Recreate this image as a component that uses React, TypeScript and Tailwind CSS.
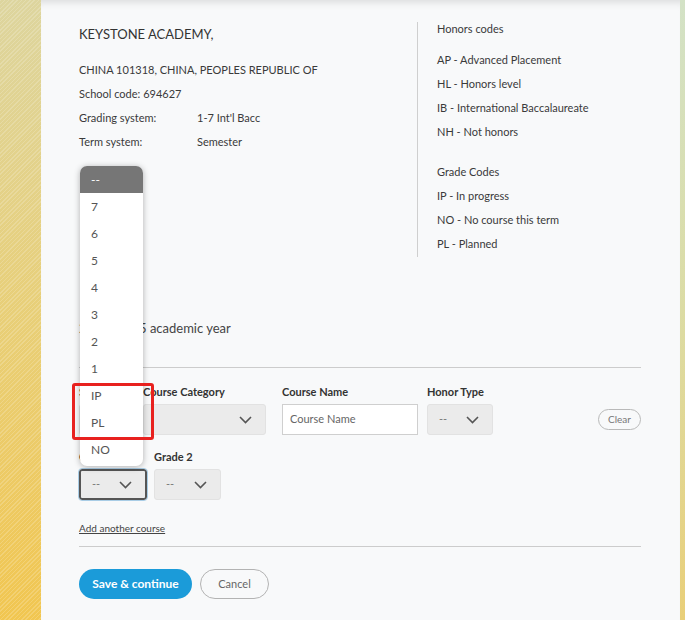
import React from "react";

const font = { fontFamily: "Lato, 'Open Sans', sans-serif" };

function Chevron() {
  return (
    <svg width="13" height="8" viewBox="0 0 13 8" fill="none">
      <polyline points="1,1 6.5,6.5 12,1" stroke="#555" strokeWidth="1.6" />
    </svg>
  );
}

function FakeSelect({ width, value = "", focused = false }: { width: string; value?: string; focused?: boolean }) {
  return (
    <div
      className={`${width} h-[31px] flex items-center justify-between pl-[11px] pr-[13px] rounded-[3px] bg-[#ebebeb] text-[11px] text-[#777] ${
        focused ? "border-2 border-[#555] outline outline-1 outline-[#a9cde6]" : "border border-[#e2e2e2]"
      }`}
    >
      <span>{value}</span>
      <Chevron />
    </div>
  );
}

const gradeOptions = ["7", "6", "5", "4", "3", "2", "1", "IP", "PL", "NO"];

export default function App() {
  return (
    <div className="relative w-[685px] h-[620px] flex overflow-hidden text-[#3a3a3a]" style={font}>
      {/* left strip */}
      <div className="w-[41px] h-full bg-gradient-to-b from-[#ddd59e] via-[#e8cf78] to-[#f1c650]">
        <div className="w-full h-full bg-[repeating-linear-gradient(135deg,rgba(255,255,255,0.18)_0px,rgba(255,255,255,0.18)_1px,transparent_1px,transparent_3px)]" />
      </div>

      {/* card */}
      <div className="flex-1 h-full bg-[#f8f9fa] shadow-[inset_0_9px_8px_-7px_rgba(0,0,0,0.13)] pl-[38px] pr-[39px]">
        {/* school info + codes */}
        <div className="flex items-start mt-[17px]">
          <div className="w-[338px] pt-[5px]">
            <div className="text-[13px] leading-[24px] text-[#333]">KEYSTONE ACADEMY,</div>
            <div className="mt-[12px] text-[11px] leading-[24px]">
              <div>CHINA 101318, CHINA, PEOPLES REPUBLIC OF</div>
              <div>School code: 694627</div>
              <div className="flex">
                <span className="w-[118px]">Grading system:</span>
                <span>1-7 Int'l Bacc</span>
              </div>
              <div className="flex">
                <span className="w-[118px]">Term system:</span>
                <span>Semester</span>
              </div>
            </div>
          </div>
          <div className="mt-[5px] h-[235px] border-l border-[#cfcfcf]" />
          <div className="pl-[19px] text-[11px] leading-[24px]">
            <div>Honors codes</div>
            <div className="mt-[7px]">AP - Advanced Placement</div>
            <div>HL - Honors level</div>
            <div>IB - International Baccalaureate</div>
            <div>NH - Not honors</div>
            <div className="mt-[16px]">Grade Codes</div>
            <div>IP - In progress</div>
            <div>NO - No course this term</div>
            <div>PL - Planned</div>
          </div>
        </div>

        {/* year heading */}
        <div className="mt-[61px] text-[13px] leading-[20px] text-[#444]">
          <span className="tracking-[0.3px]">2024-202</span>5 academic year
        </div>
        <div className="mt-[29px] border-t border-[#cccccc]" />

        {/* course row */}
        <div className="mt-[16px] flex items-end">
          <div className="w-[57px] flex flex-col gap-[4px]">
            <span className="text-[11px] leading-[16px] font-bold text-[#333]">Subject</span>
            <FakeSelect width="w-[57px]" value="--" />
          </div>
          <div className="ml-[7px] flex flex-col gap-[4px]">
            <span className="text-[11px] leading-[16px] font-bold text-[#333]">Course Category</span>
            <FakeSelect width="w-[123px]" />
          </div>
          <div className="ml-[16px] flex flex-col gap-[4px]">
            <span className="text-[11px] leading-[16px] font-bold text-[#333]">Course Name</span>
            <div className="w-[136px] h-[31px] flex items-center pl-[7px] bg-white border border-[#cfcfcf] text-[11px] text-[#666]">
              Course Name
            </div>
          </div>
          <div className="ml-[9px] flex flex-col gap-[4px]">
            <span className="text-[11px] leading-[16px] font-bold text-[#333]">Honor Type</span>
            <FakeSelect width="w-[66px]" value="--" />
          </div>
          <button className="ml-auto mb-[5px] w-[43px] h-[21px] rounded-full border border-[#b9b9b9] text-[10px] text-[#777]">
            Clear
          </button>
        </div>

        {/* grades row */}
        <div className="mt-[14px] flex items-end">
          <div className="flex flex-col gap-[4px]">
            <span className="text-[11px] leading-[16px] font-bold text-[#333]">Grade 1</span>
            <FakeSelect width="w-[68px]" value="--" focused />
          </div>
          <div className="ml-[7px] flex flex-col gap-[4px]">
            <span className="text-[11px] leading-[16px] font-bold text-[#333]">Grade 2</span>
            <FakeSelect width="w-[67px]" value="--" />
          </div>
        </div>

        <div className="mt-[21px] text-[10px] leading-[14px] underline text-[#444]">Add another course</div>
        <div className="mt-[11px] border-t border-[#cccccc]" />

        <div className="mt-[22px] flex gap-[8px]">
          <button className="w-[113px] h-[30px] rounded-full bg-[#1b9bd9] text-white text-[12px] font-bold">
            Save &amp; continue
          </button>
          <button className="w-[69px] h-[30px] rounded-full border border-[#b3b3b3] text-[11px] text-[#666]">
            Cancel
          </button>
        </div>
      </div>

      {/* right strip */}
      <div className="w-[5px] h-full bg-gradient-to-b from-[#d3e2c6] via-[#dcdca4] to-[#e9cf79]" />

      {/* open grade dropdown */}
      <div className="absolute left-[80px] top-[166px] w-[63px] h-[300px] bg-white rounded-[7px] shadow-[0_1px_6px_rgba(0,0,0,0.3)] overflow-hidden">
        <div className="h-[27px] flex items-center pl-[11px] bg-[#767676] text-white text-[12px]">--</div>
        {gradeOptions.map((g) => (
          <div key={g} className="h-[27px] flex items-center pl-[11px] text-[12px] text-[#555]">
            {g}
          </div>
        ))}
      </div>

      {/* highlight box */}
      <div className="absolute left-[72px] top-[383px] w-[82px] h-[57px] border-[3px] border-[#e8211f] rounded-[3px]" />
    </div>
  );
}
